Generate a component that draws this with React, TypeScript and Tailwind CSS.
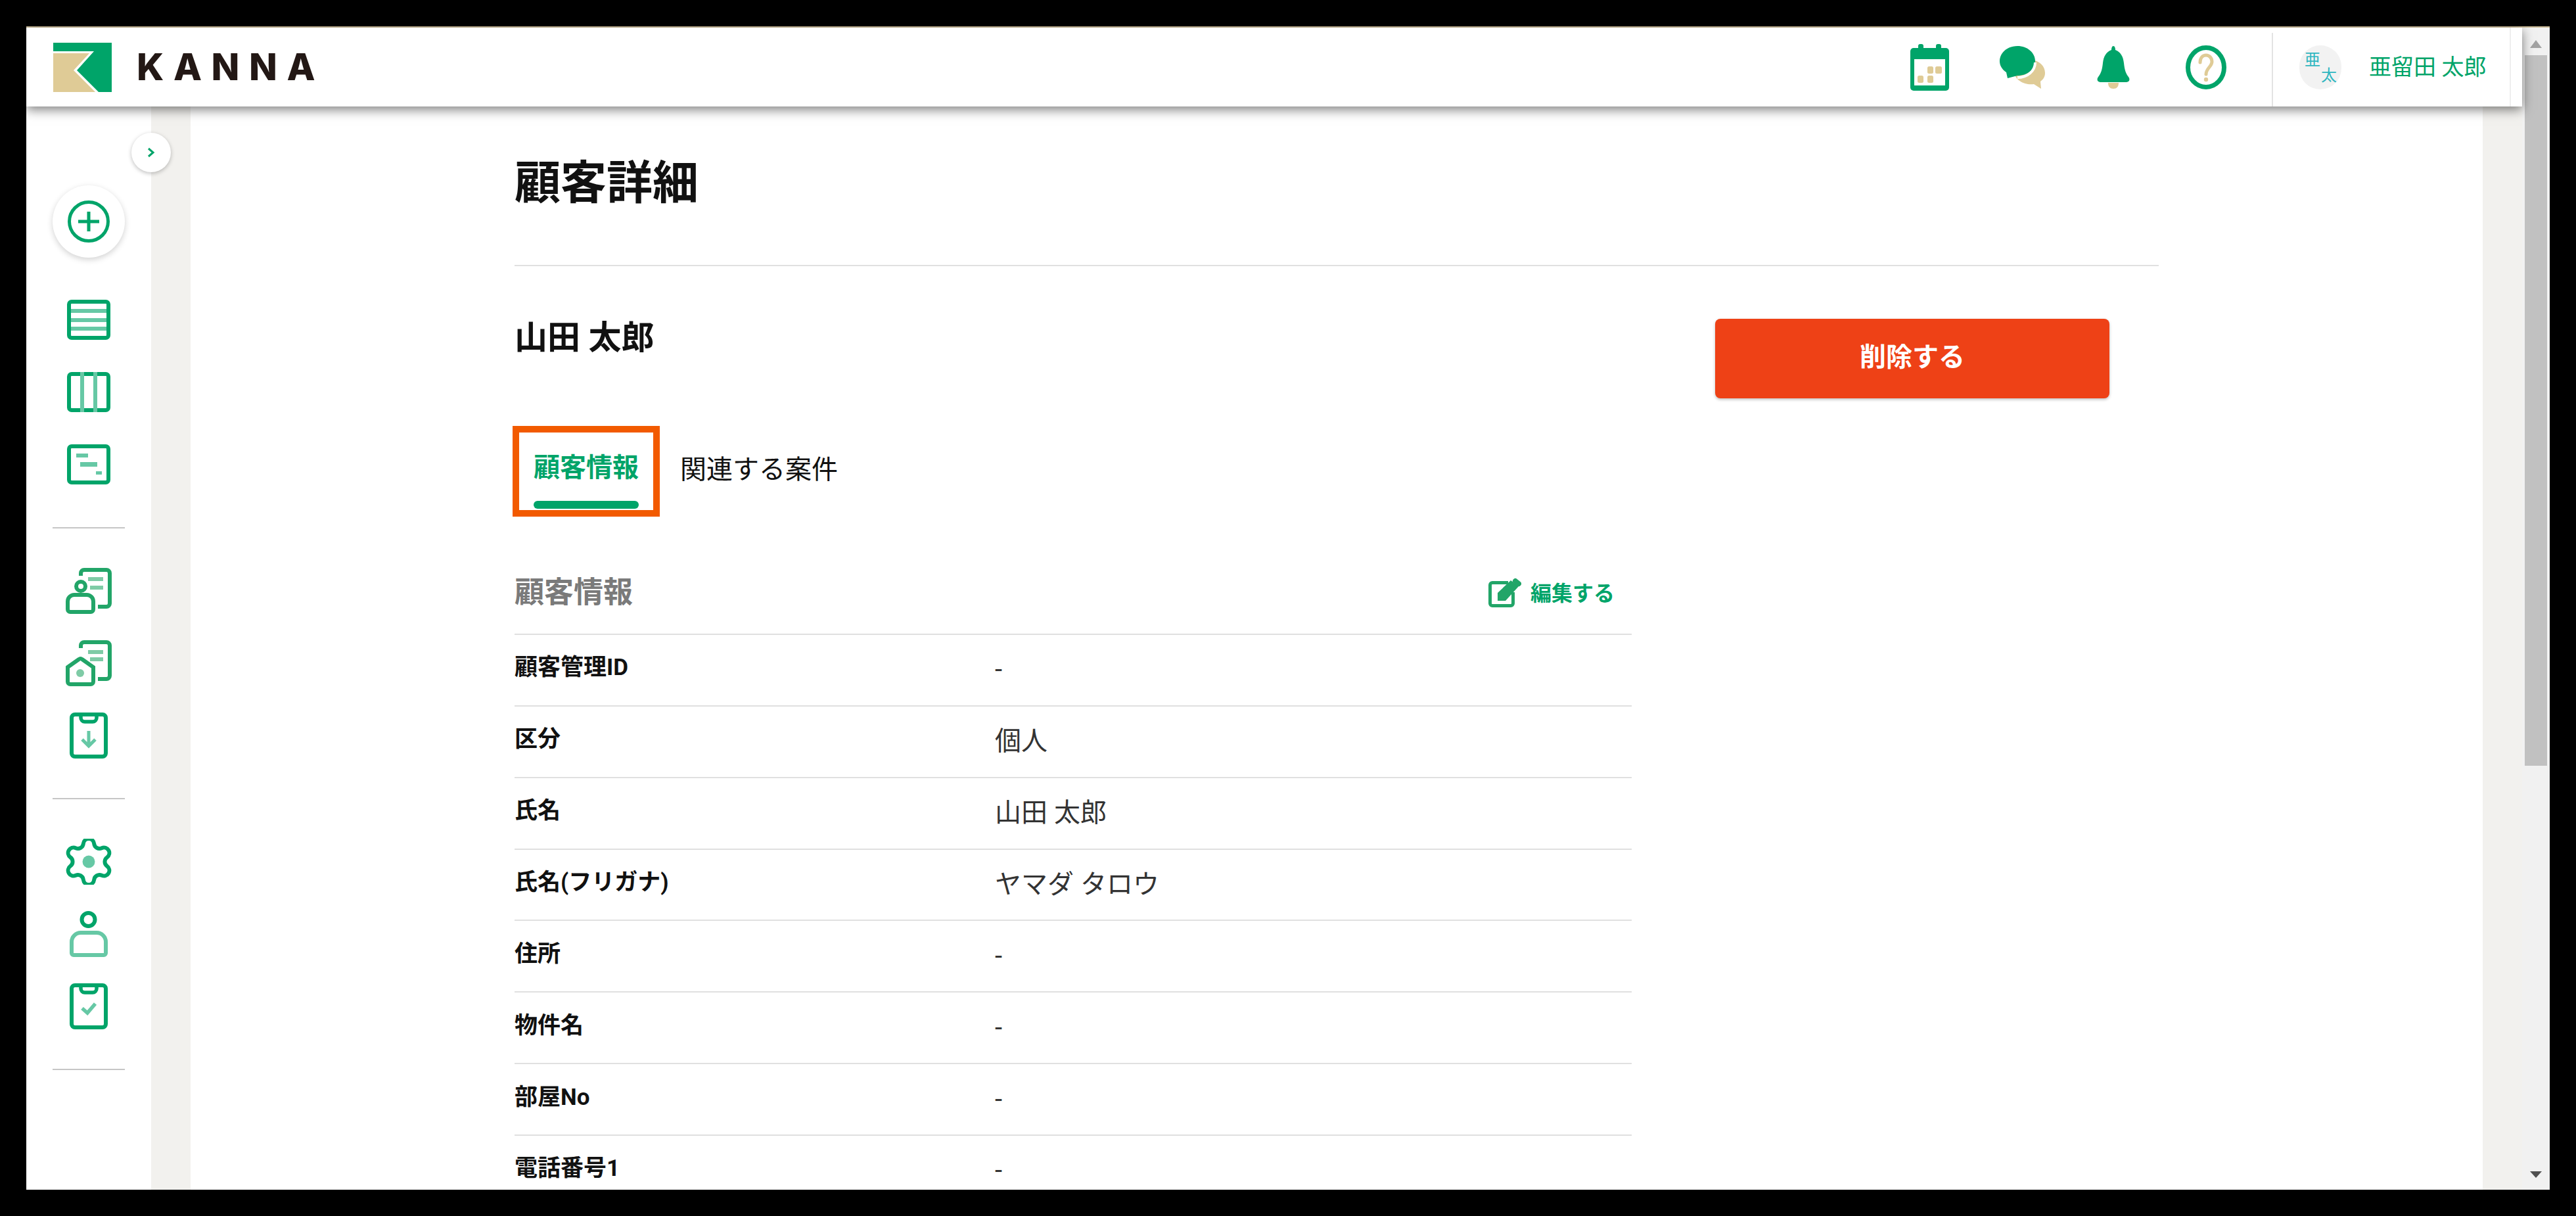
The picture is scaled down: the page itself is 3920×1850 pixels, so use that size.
const G = "#00a469";
const L = "#66c8a5";
const T = "#dfcb96";

function LogoMark() {
  return (
    <svg width="89" height="75" viewBox="0 0 89 75">
      <polygon points="0,0 89,0 89,75 69,75 36,42 62,13 0,13" fill={G} />
      <polygon points="0,16 55,16 31,42 64,75 0,75" fill={T} />
    </svg>
  );
}
function Calendar() {
  return (
    <svg width="59" height="71" viewBox="0 0 59 71">
      <rect x="0" y="6" width="59" height="65" rx="5" fill={G} />
      <rect x="12" y="0" width="8" height="12" rx="3" fill={G} />
      <rect x="39" y="0" width="8" height="12" rx="3" fill={G} />
      <rect x="6" y="23" width="47" height="40" fill="#fff" />
      <rect x="26" y="34" width="9" height="11" rx="2.5" fill={T} />
      <rect x="38" y="34" width="10" height="11" rx="2.5" fill={T} />
      <rect x="11" y="48" width="9" height="11" rx="2.5" fill={T} />
      <rect x="26" y="48" width="9" height="11" rx="2.5" fill={T} />
    </svg>
  );
}
function Chat() {
  return (
    <svg width="69" height="65" viewBox="0 0 69 65">
      <path d="M48 21C61 22 69 31 69 41C69 47 66 51 62 54L63 65L52 58C38 60 24 52 22 41Z" fill={T} />
      <path d="M27 0C42 0 54 10 54 23C54 36 42 45 27 45L12 49L10 40C4 36 0 30 0 23C0 10 12 0 27 0Z" fill={G} />
      <path d="M54 25C54 38 42 48 27 48" fill="none" stroke="#fff" strokeWidth="4" />
    </svg>
  );
}
function Bell() {
  return (
    <svg width="50" height="65" viewBox="0 0 50 65">
      <path d="M25 0C27 0 28 3 28 6C36 9 40 16 41 26C42 36 44 42 48 47C51 51 49 55 45 55H5C1 55 -1 51 2 47C6 42 8 36 9 26C10 16 14 9 22 6C22 3 23 0 25 0Z" fill={G} />
      <path d="M17 56H33C33 62 30 65 25 65C20 65 17 62 17 56Z" fill={T} />
    </svg>
  );
}
function Help() {
  return (
    <svg width="62" height="67" viewBox="0 0 62 67">
      <ellipse cx="31" cy="33.5" rx="27.5" ry="30" fill="none" stroke={G} strokeWidth="7" />
      <path d="M22 26C22 19 26 15 31 15C36 15 40 19 40 25C40 32 31 35 31 44" fill="none" stroke={T} strokeWidth="5" strokeLinecap="round" />
      <circle cx="31" cy="52" r="3.2" fill={T} />
    </svg>
  );
}
function Plus() {
  return (
    <svg width="66" height="64" viewBox="0 0 66 64">
      <circle cx="33" cy="32" r="29.5" fill="none" stroke={G} strokeWidth="5" />
      <path d="M33 17V47M17 32H49" fill="none" stroke={G} strokeWidth="5" />
    </svg>
  );
}
function TableIcon() {
  return (
    <svg width="66" height="61" viewBox="0 0 66 61">
      <path d="M3 17H63M3 31H63M3 44H63" stroke={L} strokeWidth="6" />
      <rect x="3" y="3" width="60" height="55" rx="4" fill="none" stroke={G} strokeWidth="6" />
    </svg>
  );
}
function ColumnsIcon() {
  return (
    <svg width="66" height="61" viewBox="0 0 66 61">
      <rect x="3" y="3" width="60" height="55" rx="4" fill="none" stroke={G} strokeWidth="6" />
      <path d="M23 0V61M43 0V61" stroke={L} strokeWidth="6" />
    </svg>
  );
}
function GanttIcon() {
  return (
    <svg width="66" height="61" viewBox="0 0 66 61">
      <rect x="3" y="3" width="60" height="55" rx="4" fill="none" stroke={G} strokeWidth="6" />
      <rect x="14" y="14" width="18" height="6" fill={L} />
      <rect x="20" y="27" width="26" height="7" fill={L} />
      <rect x="44" y="41" width="9" height="5" fill={L} />
    </svg>
  );
}
function DocLines({ a, b }: { a: number; b: number }) {
  return (
    <>
      <path d="M23 12V8A5 5 0 0 1 28 3H62A5 5 0 0 1 67 8V54A5 5 0 0 1 62 59H49" fill="none" stroke="#22a568" strokeWidth="6" />
      <path d={`M34 ${a}H57M37 ${b}H57`} stroke="#7fcba6" strokeWidth="6" />
    </>
  );
}
function CustomerIcon() {
  return (
    <svg width="70" height="70" viewBox="0 0 70 70">
      <DocLines a={17} b={30} />
      <circle cx="23" cy="28" r="7" fill="none" stroke="#22a568" strokeWidth="6" />
      <path d="M13 41H32A10 10 0 0 1 42 51V63A4 4 0 0 1 38 67H7A4 4 0 0 1 3 63V51A10 10 0 0 1 13 41Z" fill="none" stroke="#22a568" strokeWidth="6" />
    </svg>
  );
}
function HouseIcon() {
  return (
    <svg width="70" height="70" viewBox="0 0 70 70">
      <DocLines a={18} b={29} />
      <path d="M3 41L20 29A4 4 0 0 1 25 29L42 41V63A4 4 0 0 1 38 67H7A4 4 0 0 1 3 63Z" fill="#fff" stroke="#22a568" strokeWidth="6" />
      <circle cx="22" cy="50" r="6" fill="#7fcba6" />
    </svg>
  );
}
function Clipboard({ children }: { children: React.ReactNode }) {
  return (
    <svg width="58" height="70" viewBox="0 0 58 70">
      <rect x="3" y="3" width="52" height="64" rx="5" fill="none" stroke={G} strokeWidth="6" />
      <path d="M17 3V8A6 6 0 0 0 23 14H35A6 6 0 0 0 41 8V3" fill="none" stroke={G} strokeWidth="5.5" />
      {children}
    </svg>
  );
}
function GearIcon() {
  return (
    <svg width="70" height="70" viewBox="2 2 20 20">
      <path d="M9.671 4.136a2.34 2.34 0 0 1 4.659 0 2.34 2.34 0 0 0 3.319 1.915 2.34 2.34 0 0 1 2.33 4.033 2.34 2.34 0 0 0 0 3.831 2.34 2.34 0 0 1-2.33 4.033 2.34 2.34 0 0 0-3.319 1.915 2.34 2.34 0 0 1-4.659 0 2.34 2.34 0 0 0-3.32-1.915 2.34 2.34 0 0 1-2.33-4.033 2.34 2.34 0 0 0 0-3.831A2.34 2.34 0 0 1 6.35 6.051a2.34 2.34 0 0 0 3.319-1.915" fill="none" stroke={G} strokeWidth="1.700" />
      <circle cx="12" cy="12" r="2.700" fill={L} />
    </svg>
  );
}
function PersonIcon() {
  return (
    <svg width="58" height="70" viewBox="0 0 58 70">
      <circle cx="28.5" cy="13" r="10" fill="none" stroke={G} strokeWidth="6" />
      <path d="M17 33H41A14 14 0 0 1 55 47V64A3 3 0 0 1 52 67H6A3 3 0 0 1 3 64V47A14 14 0 0 1 17 33Z" fill="none" stroke={L} strokeWidth="6" />
    </svg>
  );
}
function EditIcon() {
  return (
    <svg width="50" height="45" viewBox="0 0 50 45">
      <path d="M30 7.5H6A3.5 3.5 0 0 0 2.500 11V39A3.500 3.500 0 0 0 6 42.500H34A3.500 3.500 0 0 0 37.500 39V22" fill="none" stroke="#22a568" strokeWidth="5" />
      <polygon points="14,35 14,23 34,4 46,13 26,35" fill="#22a568" />
      <path d="M41 5L46 9" stroke="#22a568" strokeWidth="8" strokeLinecap="round" />
    </svg>
  );
}

const rows: [string, string][] = [
  ["顧客管理ID", "-"],
  ["区分", "個人"],
  ["氏名", "山田 太郎"],
  ["氏名(フリガナ)", "ヤマダ タロウ"],
  ["住所", "-"],
  ["物件名", "-"],
  ["部屋No", "-"],
  ["電話番号1", "-"],
];

function SideDivider() {
  return <div className="h-[2px] w-[110px] bg-[#c6c6c6]" />;
}

export default function App() {
  return (
    <div
      className="h-[1850px] w-[3920px] bg-black p-[40px] text-[#222]"
      style={{ fontFamily: 'Roboto, "Noto Sans CJK JP", sans-serif' }}
    >
      <div className="flex h-full flex-col overflow-hidden bg-white">
        <div className="h-[2px] shrink-0 bg-[#c9b996]" />
        <div className="flex min-h-0 flex-1">
          <div className="relative flex min-w-0 flex-1 flex-col">
            <header className="relative z-10 h-[120px] shrink-0 bg-white shadow-[0_5px_16px_rgba(0,0,0,0.5)]">
              <div className="flex h-full w-[3781px] items-center border-r-2 border-[#eeeeee] pl-[41px]">
                <LogoMark />
                <span
                  className="ml-[38px] text-[56px] leading-none font-extrabold tracking-[0.26em] text-[#231815]"
                  style={{ fontFamily: 'Inter, sans-serif' }}
                >
                  KANNA
                </span>
                <div className="ml-auto flex h-full items-center">
                  <Calendar />
                  <div className="ml-[77px] flex"><Chat /></div>
                  <div className="ml-[79px] flex"><Bell /></div>
                  <div className="ml-[85px] flex"><Help /></div>
                  <div className="mt-[8px] ml-[69px] flex h-[112px] w-[362px] shrink-0 items-center self-start border-l-2 border-[#e3e3e3] pb-[8px] pl-[40px]">
                    <div className="flex h-[67px] w-[64px] flex-col rounded-full bg-[#f2f2f2] text-[24px] leading-[24px] text-[#2fb6c0]">
                      <span className="mt-[10px] ml-[8px]">亜</span>
                      <span className="ml-[33px]">太</span>
                    </div>
                    <span className="ml-[42px] text-[34px] leading-none whitespace-nowrap text-[#00a469]">亜留田 太郎</span>
                  </div>
                </div>
              </div>
            </header>

            <div className="flex min-h-0 flex-1">
              <aside className="relative w-[190px] shrink-0 bg-white">
                <button className="absolute top-[40px] left-[160px] z-[5] flex h-[60px] w-[60px] items-center justify-center rounded-full bg-white shadow-[0_2px_6px_rgba(0,0,0,0.25)]">
                  <svg width="12" height="16" viewBox="0 0 12 16">
                    <path d="M2 2L9 8L2 14" fill="none" stroke={G} strokeWidth="3" />
                  </svg>
                </button>
                <div className="flex flex-col items-center pt-[120px]">
                  <div className="flex h-[110px] w-[110px] items-center justify-center rounded-full bg-white shadow-[0_3px_10px_rgba(0,0,0,0.18)]">
                    <Plus />
                  </div>
                  <div className="mt-[64px] flex flex-col items-center gap-[49px]">
                    <TableIcon />
                    <ColumnsIcon />
                    <GanttIcon />
                  </div>
                  <div className="mt-[65px]"><SideDivider /></div>
                  <div className="mt-[60px] flex flex-col items-center gap-[40px]">
                    <CustomerIcon />
                    <HouseIcon />
                    <Clipboard>
                      <path d="M29 28V50M19 41L29 51L39 41" fill="none" stroke={L} strokeWidth="5" />
                    </Clipboard>
                  </div>
                  <div className="mt-[60px]"><SideDivider /></div>
                  <div className="mt-[60px] flex flex-col items-center gap-[40px]">
                    <GearIcon />
                    <PersonIcon />
                    <Clipboard>
                      <path d="M19 38L27 45L39 31" fill="none" stroke={L} strokeWidth="5.500" />
                    </Clipboard>
                  </div>
                  <div className="mt-[60px]"><SideDivider /></div>
                </div>
              </aside>

              <div className="w-[60px] shrink-0 bg-[#f2f1ee]" />

              <main className="min-h-0 w-[3488px] shrink-0 overflow-hidden bg-white pl-[493px]">
                <div className="w-[2502px]">
                  <div className="flex h-[243px] items-center border-b-[2px] border-[#e0e0e0] pb-[7px]">
                    <h1 className="text-[70px] leading-none font-bold text-[#111]">顧客詳細</h1>
                  </div>
                  <div className="flex items-start justify-between pt-[80px] pr-[75px]">
                    <div className="mt-[3px] text-[50px] leading-[52px] font-bold text-[#111]">山田 太郎</div>
                    <button className="flex h-[121px] w-[600px] items-center justify-center rounded-[8px] bg-[#ee4116] pb-[3px] text-[40px] font-bold text-white shadow-[0_2px_4px_rgba(0,0,0,0.25)]">
                      削除する
                    </button>
                  </div>
                  <div className="mt-[42px] -ml-[3px] flex items-center">
                    <div className="flex h-[138px] w-[224px] flex-col items-center border-[10px] border-[#f25a00]">
                      <span className="mt-[34px] text-[40px] leading-[40px] font-bold text-[#00a469]">顧客情報</span>
                      <div className="mt-[30px] h-[12px] w-[160px] rounded-full bg-[#00a469]" />
                    </div>
                    <span className="ml-[31px] pb-[4px] text-[40px] leading-[40px] text-[#111]">関連する案件</span>
                  </div>
                  <div className="w-[1700px]">
                    <div className="flex h-[178px] items-center justify-between pt-[52px] pr-[26px]">
                      <h2 className="text-[45px] leading-none font-bold text-[#7a7a7a]">顧客情報</h2>
                      <div className="flex items-center gap-[14px]">
                        <EditIcon />
                        <span className="mt-[3px] text-[32px] leading-none font-bold text-[#00a469]">編集する</span>
                      </div>
                    </div>
                    {rows.map(([label, value]) => (
                      <div key={label} className="flex h-[108.86px] items-center border-t-[2px] border-[#e0e0e0]">
                        <div className="w-[731px] shrink-0 pb-[7px] text-[35px] leading-none font-bold text-[#111]">{label}</div>
                        <div className="text-[40px] leading-none text-[#333]">{value}</div>
                      </div>
                    ))}
                  </div>
                </div>
              </main>

              <div className="min-w-0 flex-1 bg-[#f2f1ee]" />
            </div>
          </div>

          <div className="flex w-[42px] shrink-0 flex-col items-center bg-[#f1f1f1]">
            <svg width="18" height="12" viewBox="0 0 18 12" className="mt-[19px] shrink-0">
              <polygon points="9,0 18,12 0,12" fill="#a3a3a3" />
            </svg>
            <div className="mt-[11px] h-[1081px] w-[34px] shrink-0 bg-[#c1c1c1]" />
            <svg width="18" height="10" viewBox="0 0 18 10" className="mt-auto mb-[18px] shrink-0">
              <polygon points="0,0 18,0 9,10" fill="#505050" />
            </svg>
          </div>
        </div>
      </div>
    </div>
  );
}
